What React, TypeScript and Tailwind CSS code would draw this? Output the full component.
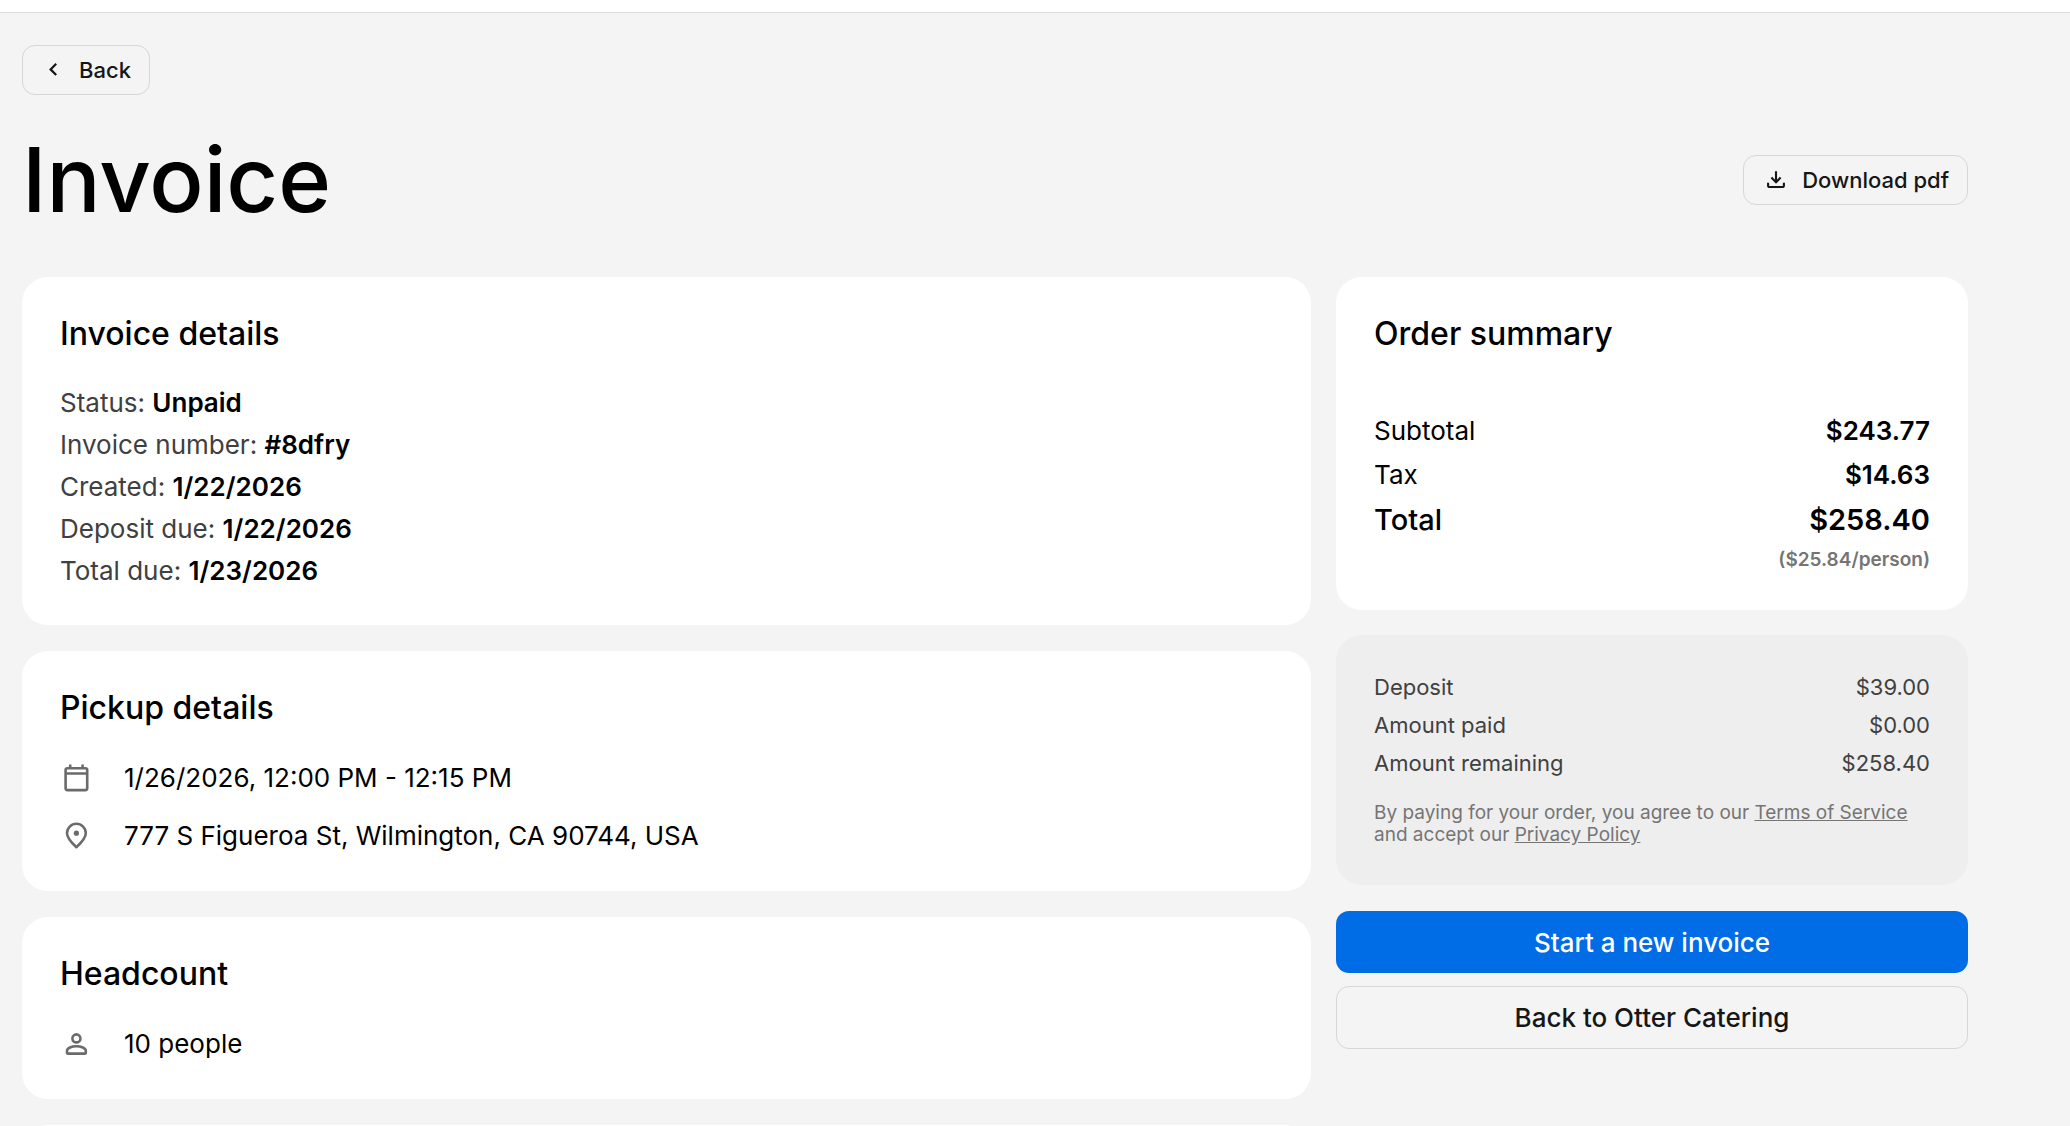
import type { ReactNode } from "react"

const invoiceDetails = [
    { label: "Status", value: "Unpaid" },
    { label: "Invoice number", value: "#8dfry" },
    { label: "Created", value: "1/22/2026" },
    { label: "Deposit due", value: "1/22/2026" },
    { label: "Total due", value: "1/23/2026" },
]

const payments = [
    { label: "Deposit", value: "$39.00" },
    { label: "Amount paid", value: "$0.00" },
    { label: "Amount remaining", value: "$258.40" },
]

function ChevronIcon() {
    return (
        <svg viewBox="0 0 20 20" className="size-5" fill="none" stroke="currentColor" strokeWidth="2.2" aria-hidden="true">
            <path d="M13.2 3.8 7.6 9.4l5.6 5.600" />
        </svg>
    )
}

function DownloadIcon() {
    return (
        <svg viewBox="0 0 20 20" className="size-5" fill="none" stroke="currentColor" strokeWidth="2.1" aria-hidden="true">
            <path d="M10 1.200v11M5.400 7.600l4.600 4.600 4.600-4.600M2.100 12.800v2.600a1.600 1.600 0 0 0 1.600 1.600h12.600a1.600 1.600 0 0 0 1.600-1.600v-2.600" />
        </svg>
    )
}

function CalendarIcon() {
    return (
        <svg viewBox="0 0 32 32" className="size-8 shrink-0 text-[#6b6b6b]" fill="none" stroke="currentColor" strokeWidth="2.6" aria-hidden="true">
            <rect x="5.6" y="6.2" width="21.6" height="21.9" rx="1.8" />
            <path d="M5.600 11.500h21.600M10.200 2.500V6M22.600 2.500V6" />
        </svg>
    )
}

function PinIcon() {
    return (
        <svg viewBox="0 0 32 32" className="size-8 shrink-0 text-[#6b6b6b]" fill="none" stroke="currentColor" strokeWidth="2.6" strokeLinejoin="round" aria-hidden="true">
            <path d="M16.400 27.200C10.400 21.600 7 17 7 13.200a9.400 9.400 0 0 1 18.800 0c0 3.800-3.400 8.400-9.400 14Z" />
            <circle cx="16.4" cy="13.2" r="2.6" fill="currentColor" stroke="none" />
        </svg>
    )
}

function PersonIcon() {
    return (
        <svg viewBox="0 0 32 32" className="size-8 shrink-0 text-[#6b6b6b]" fill="none" stroke="currentColor" strokeWidth="2.6" strokeLinejoin="round" aria-hidden="true">
            <circle cx="16.4" cy="10.4" r="4" />
            <path d="M7 23c0-3 4.700-4.700 9.400-4.700s9.400 1.700 9.400 4.700v1.400a1.200 1.200 0 0 1-1.200 1.200H8.200A1.200 1.200 0 0 1 7 24.400Z" />
        </svg>
    )
}

function Card({ title, children }: { title: string; children: ReactNode }) {
    return (
        <section className="rounded-[26px] bg-white px-[38px] pt-[37px] pb-[33px]">
            <h2 className="mb-7 text-[32px] leading-[40px] font-medium">{title}</h2>
            {children}
        </section>
    )
}

export default function App() {
    return (
        <div className="h-screen overflow-hidden bg-[#f4f4f4] font-['Inter',sans-serif] text-black">
            <header className="h-[13px] border-b border-[#dcdcdc] bg-white" />
            <main className="pt-8 pr-[102px] pl-[22px]">
                <button type="button" className="flex h-[50px] items-center gap-4 rounded-[13px] border border-[#d6d6d6] pr-[18px] pl-5 text-[22px] font-medium text-[#161616]">
                    <ChevronIcon />
                    Back
                </button>

                <div className="mt-[25px] flex items-center justify-between">
                    <h1 className="text-[90px] leading-[120px] font-medium">Invoice</h1>
                    <button type="button" className="flex h-[50px] items-center gap-4 rounded-[13px] border border-[#d6d6d6] pr-[18px] pl-[22px] text-[22px] font-medium text-[#161616]">
                        <DownloadIcon />
                        Download pdf
                    </button>
                </div>

                <div className="mt-[37px] flex items-start gap-[25px]">
                    <div className="flex flex-1 flex-col gap-[26px]">
                        <Card title="Invoice details">
                            <ul className="text-[26px] leading-[42px] text-[#404040]">
                                {invoiceDetails.map((item) => (
                                    <li key={item.label}>
                                        {item.label}: <strong className="font-semibold text-black">{item.value}</strong>
                                    </li>
                                ))}
                            </ul>
                        </Card>

                        <Card title="Pickup details">
                            <ul className="flex flex-col gap-[14px] text-[26px] leading-[44px]">
                                <li className="flex items-center gap-8">
                                    <CalendarIcon />
                                    1/26/2026, 12:00 PM - 12:15 PM
                                </li>
                                <li className="flex items-center gap-8">
                                    <PinIcon />
                                    777 S Figueroa St, Wilmington, CA 90744, USA
                                </li>
                            </ul>
                        </Card>

                        <Card title="Headcount">
                            <p className="flex items-center gap-8 text-[26px] leading-[44px]">
                                <PersonIcon />
                                10 people
                            </p>
                        </Card>

                        <section className="h-40 rounded-[26px] bg-white" />
                    </div>

                    <aside className="w-[632px]">
                        <Card title="Order summary">
                            <dl className="mt-[55px] text-[26px] leading-[44px]">
                                <div className="flex justify-between">
                                    <dt>Subtotal</dt>
                                    <dd className="font-semibold">$243.77</dd>
                                </div>
                                <div className="flex justify-between">
                                    <dt>Tax</dt>
                                    <dd className="font-semibold">$14.63</dd>
                                </div>
                                <div className="flex justify-between text-[29px] leading-[46px]">
                                    <dt className="font-medium">Total</dt>
                                    <dd className="font-semibold">$258.40</dd>
                                </div>
                            </dl>
                            <p className="text-right text-[19px] leading-[34px] font-semibold text-[#757575]">($25.84/person)</p>
                        </Card>

                        <section className="mt-[25px] rounded-[26px] bg-[#eeeeee] px-[38px] pt-[33px] pb-[39px]">
                            <dl className="text-[22px] leading-[38px] text-[#404040]">
                                {payments.map((row) => (
                                    <div key={row.label} className="flex justify-between">
                                        <dt>{row.label}</dt>
                                        <dd>{row.value}</dd>
                                    </div>
                                ))}
                            </dl>
                            <p className="mt-5 text-[19px] leading-[22px] text-[#757575]">
                                By paying for your order, you agree to our <a href="#terms" className="underline">Terms of Service</a> and accept our <a href="#privacy" className="underline">Privacy Policy</a>
                            </p>
                        </section>

                        <button type="button" className="mt-[26px] h-[62px] w-full rounded-[13px] bg-[#006ce5] text-[26px] font-medium text-white">
                            Start a new invoice
                        </button>
                        <button type="button" className="mt-[13px] h-[63px] w-full rounded-[13px] border border-[#d6d6d6] text-[26px] font-medium text-[#161616]">
                            Back to Otter Catering
                        </button>
                    </aside>
                </div>
            </main>
        </div>
    )
}
